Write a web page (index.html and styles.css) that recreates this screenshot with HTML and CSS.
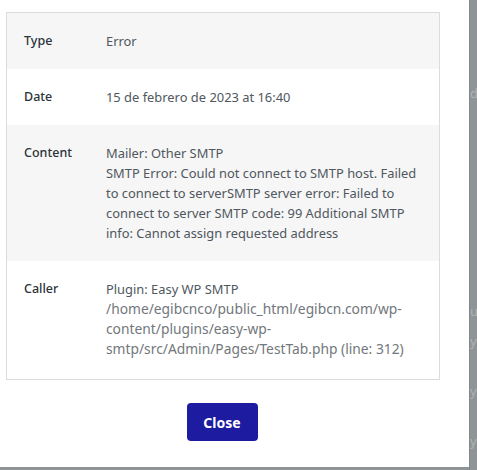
FILE: index.html
```html
<!DOCTYPE html>
<html lang="en">
<head>
    <meta charset="UTF-8">
    <meta name="viewport" content="width=device-width, initial-scale=1.0">
    <title>Log Details</title>
    <link rel="stylesheet" href="styles.css">
</head>
<body>

    <div class="page">
        <!-- Modal -->
        <div class="modal">
            <div class="details">
                <div class="row shaded">
                    <div class="label">Type</div>
                    <div class="value">Error</div>
                </div>
                <div class="row">
                    <div class="label">Date</div>
                    <div class="value">15 de febrero de 2023 at 16:40</div>
                </div>
                <div class="row shaded">
                    <div class="label">Content</div>
                    <div class="value">Mailer: Other SMTP<br>SMTP Error: Could not connect to SMTP host. Failed to connect to serverSMTP server error: Failed to connect to server SMTP code: 99 Additional SMTP info: Cannot assign requested address</div>
                </div>
                <div class="row caller">
                    <div class="label">Caller</div>
                    <div class="value">
                        Plugin: Easy WP SMTP
                        <div class="path">/home/egibcnco/public_html/egibcn.com/wp-content/plugins/easy-wp-smtp/src/Admin/Pages/TestTab.php (line: 312)</div>
                    </div>
                </div>
            </div>
            <div class="actions">
                <button class="close-btn">Close</button>
            </div>
        </div>

        <!-- page behind the overlay -->
        <div class="behind">
            <span class="ghost g1">d</span>
            <span class="ghost g2">u</span>
            <span class="ghost g3">y</span>
            <span class="ghost g4">y</span>
            <span class="ghost g5">y</span>
        </div>
    </div>

</body>
</html>
```

FILE: styles.css
```css
body {
    margin: 0;
    padding: 0;
    background-color: #8f9496;
    font-family: "Noto Sans", "Open Sans", Arial, sans-serif;
}
.page {
    display: flex;
    width: 477px;
    height: 470px;
    overflow: hidden;
}
.modal {
    width: 469px;
    height: 467px;
    flex-shrink: 0;
    background: white;
    padding: 12px 0 0 6px;
    box-sizing: border-box;
}
.details {
    width: 432px;
    border: 1px solid #dcdcde;
}
.row {
    display: flex;
    padding: 18px 18px 18px 17px;
    font-size: 12.9px;
    line-height: 20px;
}
.row.shaded {
    background-color: #f6f6f6;
}
.row.caller {
    padding-bottom: 20px;
}
.label {
    width: 82px;
    flex-shrink: 0;
    color: #2c3338;
    font-size: 12.5px;
    font-weight: 500;
}
.value {
    color: #50575e;
}
.path {
    color: #72777c;
    font-size: 13.8px;
}
.actions {
    display: flex;
    justify-content: center;
    width: 432px;
    padding-top: 23px;
}
.close-btn {
    width: 71px;
    height: 38px;
    background-color: #1d1ba0;
    color: white;
    border: none;
    border-radius: 4px;
    font-family: "Noto Sans", "Open Sans", Arial, sans-serif;
    font-size: 14px;
    font-weight: bold;
    cursor: pointer;
}
.behind {
    flex: 1;
    position: relative;
    border-left: 1px solid #82878a;
}
.ghost {
    position: absolute;
    left: 0;
    color: #aeb2b4;
    font-size: 13px;
    font-family: "Noto Sans", Arial, sans-serif;
}
.g1 { top: 84px; }
.g2 { top: 302px; }
.g3 { top: 332px; }
.g4 { top: 382px; }
.g5 { top: 432px; }
```
